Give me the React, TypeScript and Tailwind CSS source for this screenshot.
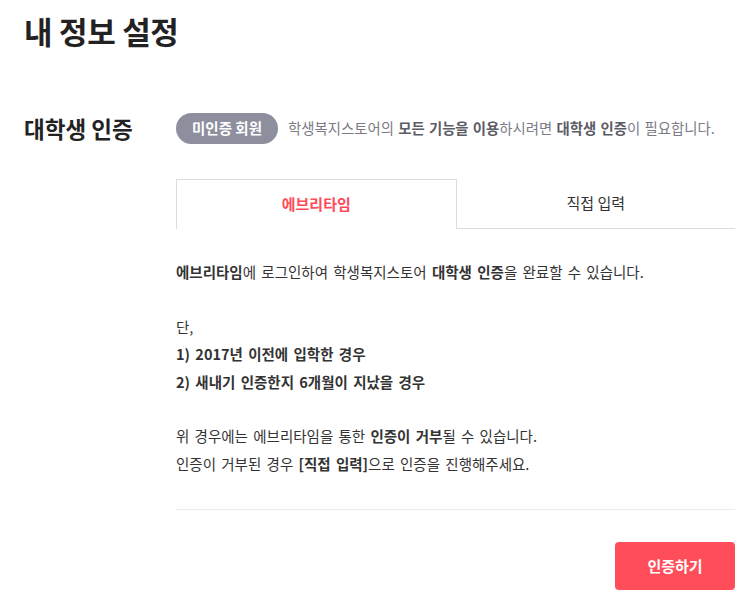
import { useState } from "react";

const font = { fontFamily: '"Noto Sans CJK KR", "Noto Sans", sans-serif' };

const App = () => {
  const [tab, setTab] = useState(0);

  return (
    <div className="w-[752px] min-h-[611px] bg-white text-[#222]" style={font}>
      <div className="pl-6 pr-[17px] pt-[9px]">
        <h1 className="text-[31px] font-bold leading-[44px] tracking-[-0.3px]">내 정보 설정</h1>

        <div className="flex mt-[53px]">
          <h2 className="w-[152px] shrink-0 text-[22.5px] font-bold leading-[32px] pt-[6px]">대학생 인증</h2>

          <div className="flex-1">
            <div className="flex items-center h-[32px] mt-[6px]">
              <span className="h-[31px] px-[16px] rounded-full bg-[#8e8f9e] text-white text-[14.5px] font-bold flex items-center">
                미인증 회원
              </span>
              <p className="ml-[10px] text-[14.4px] text-[#7b7b85] [word-spacing:1px]">
                학생복지스토어의 <b className="text-[#5c5c66]">모든 기능을 이용</b>하시려면{" "}
                <b className="text-[#5c5c66]">대학생 인증</b>이 필요합니다.
              </p>
            </div>

            <div className="flex mt-[35px]">
              <button
                onClick={() => setTab(0)}
                className={`flex-1 h-[50px] text-[15px] ${
                  tab === 0
                    ? "border border-b-0 border-[#dcdcdc] text-[#ff4b5a] font-bold"
                    : "border-b border-[#dcdcdc] text-[#333]"
                }`}
              >
                에브리타임
              </button>
              <button
                onClick={() => setTab(1)}
                className={`flex-1 h-[50px] text-[15px] ${
                  tab === 1
                    ? "border border-b-0 border-[#dcdcdc] text-[#ff4b5a] font-bold"
                    : "border-b border-[#dcdcdc] text-[#333]"
                }`}
              >
                직접 입력
              </button>
            </div>

            <div className="pt-[29px] pb-[32px] text-[14.5px] leading-[27.5px] text-[#333] [word-spacing:2px]">
              <p>
                <b>에브리타임</b>에 로그인하여 학생복지스토어 <b>대학생 인증</b>을 완료할 수 있습니다.
              </p>
              <p className="mt-[27px]">단,</p>
              <p className="font-bold">1) 2017년 이전에 입학한 경우</p>
              <p className="font-bold">2) 새내기 인증한지 6개월이 지났을 경우</p>
              <p className="mt-[27px]">
                위 경우에는 에브리타임을 통한 <b>인증이 거부</b>될 수 있습니다.
              </p>
              <p>
                인증이 거부된 경우 <b>[직접 입력]</b>으로 인증을 진행해주세요.
              </p>
            </div>

            <div className="border-t border-[#ebebeb]" />

            <div className="flex justify-end mt-[32px]">
              <button className="w-[120px] h-[48px] rounded-[4px] bg-[#ff4d5a] text-white text-[15px] font-bold">
                인증하기
              </button>
            </div>
          </div>
        </div>
      </div>
    </div>
  );
};

export default App;
